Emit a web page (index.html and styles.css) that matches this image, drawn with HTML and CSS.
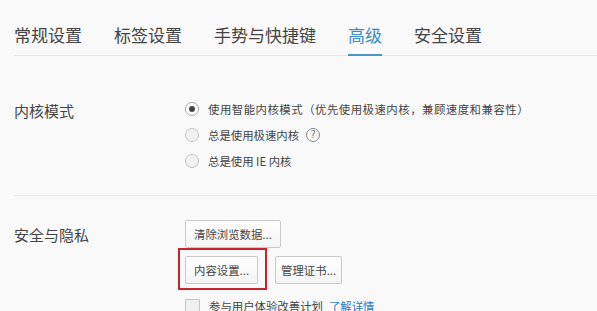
FILE: index.html
```html
<!DOCTYPE html>
<html lang="zh-CN">
<head>
<meta charset="utf-8">
<title>高级设置</title>
<link rel="stylesheet" href="styles.css">
</head>
<body>
<nav class="tabs">
  <span class="tab">常规设置</span>
  <span class="tab">标签设置</span>
  <span class="tab">手势与快捷键</span>
  <span class="tab active">高级</span>
  <span class="tab">安全设置</span>
</nav>

<section class="section first">
  <div class="label">内核模式</div>
  <div class="options">
    <div class="opt"><span class="radio checked"></span><span class="wide">使用智能内核模式（优先使用极速内核，兼顾速度和兼容性）</span></div>
    <div class="opt"><span class="radio"></span><span>总是使用极速内核</span><span class="help">?</span></div>
    <div class="opt"><span class="radio"></span><span>总是使用 IE 内核</span></div>
  </div>
</section>

<section class="section second">
  <div class="label">安全与隐私</div>
  <div class="options">
    <div class="btnrow"><span class="btn">清除浏览数据...</span></div>
    <div class="btnrow"><span class="btn marked">内容设置...</span><span class="btn gap">管理证书...</span></div>
    <div class="checkrow"><span class="checkbox"></span><span>参与用户体验改善计划</span><span class="link">了解详情</span></div>
  </div>
</section>
</body>
</html>
```

FILE: styles.css
```css
html, body {
  margin: 0;
  padding: 0;
}
body {
  background: #f9f9f9;
  color: #333;
  font-family: "Noto Sans CJK SC", "Noto Sans", sans-serif;
  width: 597px;
  height: 311px;
  overflow: hidden;
}
.wide {
  letter-spacing: 0.5px;
}
.tabs {
  display: flex;
  gap: 32px;
  margin-left: 14px;
  padding-top: 26px;
  border-bottom: 1px solid #e6e6e6;
}
.tab {
  font-size: 17px;
  line-height: 17px;
  color: #444;
  padding-bottom: 11px;
  border-bottom: 2px solid transparent;
  margin-bottom: -1px;
}
.tab.active {
  color: #3d8cc4;
  border-bottom-color: #4a95c6;
}
.section {
  display: flex;
}
.section.first {
  padding-top: 40px;
  padding-bottom: 21px;
  border-bottom: 1px solid #e8e8e8;
  margin-left: 14px;
}
.section.second {
  padding-top: 24px;
  margin-left: 14px;
}
.label {
  width: 171px;
  font-size: 15px;
  line-height: 26px;
  color: #444;
  padding-top: 2px;
}
.options {
  display: flex;
  flex-direction: column;
}
.opt {
  display: flex;
  align-items: center;
  height: 26px;
  font-size: 11.4px;
  color: #444;
}
.radio {
  width: 12px;
  height: 12px;
  border: 1px solid #c4c4c4;
  border-radius: 50%;
  background: #f2f2f2;
  margin-right: 9px;
  box-sizing: content-box;
  display: flex;
  align-items: center;
  justify-content: center;
}
.radio.checked {
  background: #fff;
  border-color: #aaa;
}
.radio.checked::after {
  content: "";
  width: 6px;
  height: 6px;
  border-radius: 50%;
  background: #444;
}
.help {
  width: 12px;
  height: 12px;
  border: 1px solid #888;
  border-radius: 50%;
  margin-left: 7px;
  font-size: 10px;
  line-height: 12px;
  text-align: center;
  color: #777;
  font-family: "DejaVu Sans", sans-serif;
}
.btnrow {
  display: flex;
  margin-bottom: 8px;
}
.btn {
  position: relative;
  height: 26px;
  line-height: 26px;
  padding: 0 8px;
  font-size: 11.4px;
  color: #444;
  border: 1px solid #c9c9c9;
  border-radius: 2px;
  background: linear-gradient(#ffffff, #f4f4f4);
}
.btn.gap {
  margin-left: 17px;
  padding: 0 5px;
}
.btn.marked::after {
  content: "";
  position: absolute;
  top: -9px;
  left: -8px;
  right: -10px;
  bottom: -7px;
  border: 2px solid #c4262e;
}
.checkrow {
  display: flex;
  align-items: center;
  margin-top: 6px;
  font-size: 11.4px;
  color: #444;
}
.checkbox {
  width: 13px;
  height: 13px;
  border: 1px solid #c4c4c4;
  background: #f0f0f0;
  margin-right: 9px;
  border-radius: 1px;
}
.link {
  color: #2b7fc3;
  margin-left: 6px;
}
```
